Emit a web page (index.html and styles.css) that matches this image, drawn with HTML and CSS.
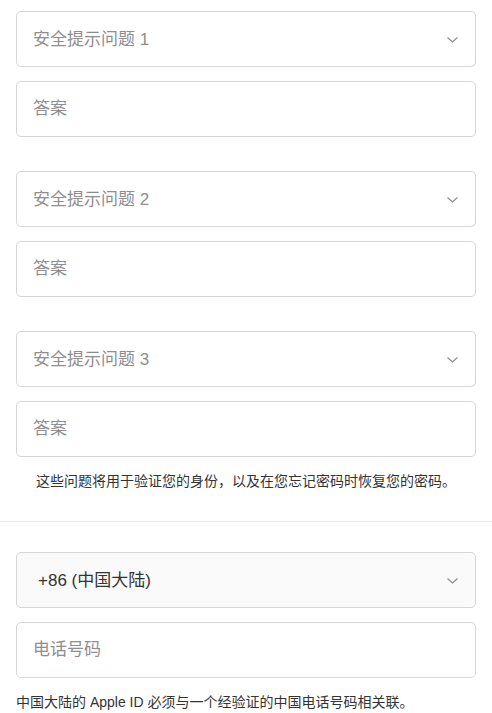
FILE: index.html
```html
<!DOCTYPE html>
<html lang="zh-CN">
<head>
    <meta charset="UTF-8">
    <meta name="viewport" content="width=device-width, initial-scale=1.0">
    <title>安全提示问题</title>
    <link rel="stylesheet" href="styles.css">
</head>
<body>
    <div class="section questions">
        <div class="question-group">
            <div class="select-wrap">
                <select class="field select">
                    <option>安全提示问题 1</option>
                </select>
                <svg class="chevron" width="11" height="6" viewBox="0 0 11 6"><path d="M0.5 0.5 L5.5 5 L10.5 0.5" fill="none" stroke="#8a8a8a" stroke-width="1.1"/></svg>
            </div>
            <input class="field" type="text" placeholder="答案">
        </div>
        <div class="question-group">
            <div class="select-wrap">
                <select class="field select">
                    <option>安全提示问题 2</option>
                </select>
                <svg class="chevron" width="11" height="6" viewBox="0 0 11 6"><path d="M0.5 0.5 L5.5 5 L10.5 0.5" fill="none" stroke="#8a8a8a" stroke-width="1.1"/></svg>
            </div>
            <input class="field" type="text" placeholder="答案">
        </div>
        <div class="question-group">
            <div class="select-wrap">
                <select class="field select">
                    <option>安全提示问题 3</option>
                </select>
                <svg class="chevron" width="11" height="6" viewBox="0 0 11 6"><path d="M0.5 0.5 L5.5 5 L10.5 0.5" fill="none" stroke="#8a8a8a" stroke-width="1.1"/></svg>
            </div>
            <input class="field" type="text" placeholder="答案">
        </div>
        <p class="hint center">这些问题将用于验证您的身份，以及在您忘记密码时恢复您的密码。</p>
    </div>

    <div class="section phone">
        <div class="question-group">
            <div class="select-wrap">
                <select class="field select filled">
                    <option>+86 (中国大陆)</option>
                </select>
                <svg class="chevron" width="11" height="6" viewBox="0 0 11 6"><path d="M0.5 0.5 L5.5 5 L10.5 0.5" fill="none" stroke="#8a8a8a" stroke-width="1.1"/></svg>
            </div>
            <input class="field" type="tel" placeholder="电话号码">
        </div>
        <p class="hint">中国大陆的 Apple ID 必须与一个经验证的中国电话号码相关联。</p>
    </div>
</body>
</html>
```

FILE: styles.css
```css
* {
    box-sizing: border-box;
}
body {
    margin: 0;
    background: #fff;
    font-family: "Liberation Sans", "Noto Sans CJK SC", sans-serif;
    color: #333;
}
.section {
    padding: 0 16px;
}
.questions {
    padding-top: 11px;
    padding-bottom: 30px;
    display: flex;
    flex-direction: column;
    gap: 34px;
}
.question-group {
    display: flex;
    flex-direction: column;
    gap: 14px;
}
.select-wrap {
    position: relative;
}
.field {
    display: block;
    width: 100%;
    height: 56px;
    margin: 0;
    padding: 0 16px;
    border: 1px solid #d6d6d6;
    border-radius: 5px;
    background: #fff;
    font-family: "Liberation Sans", "Noto Sans CJK SC", sans-serif;
    font-size: 17px;
    color: #333;
    outline: none;
}
.field::placeholder {
    color: #8e8e8e;
}
.select {
    appearance: none;
    -webkit-appearance: none;
    color: #8e8e8e;
}
.select.filled {
    background: #fafafa;
    color: #333;
    padding-left: 21px;
}
.chevron {
    position: absolute;
    right: 18px;
    top: 26px;
    pointer-events: none;
}
.hint {
    margin: -20px 0 0;
    font-size: 14px;
    line-height: 20px;
    color: #333;
}
.center {
    text-align: center;
}
.phone {
    border-top: 1px solid #e8e8e8;
    padding-top: 30px;
}
.phone .hint {
    margin-top: 14px;
}
```
